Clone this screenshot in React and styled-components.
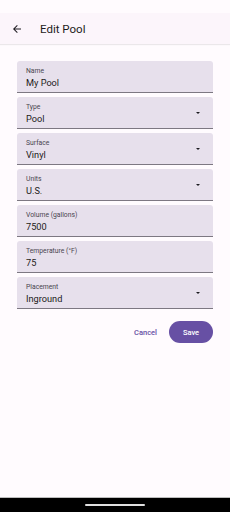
import React from 'react'
import styled, { createGlobalStyle } from 'styled-components'

const GlobalStyle = createGlobalStyle`
  html, body {
    margin: 0;
    padding: 0;
    background: #fffbfe;
    font-family: Roboto, "Noto Sans", sans-serif;
  }
`

const fields = [
  { label: 'Name', value: 'My Pool' },
  { label: 'Type', value: 'Pool', select: true },
  { label: 'Surface', value: 'Vinyl', select: true },
  { label: 'Units', value: 'U.S.', select: true },
  { label: 'Volume (gallons)', value: '7500' },
  { label: 'Temperature (°F)', value: '75' },
  { label: 'Placement', value: 'Inground', select: true }
]

const Screen = styled.div`
  width: 230px;
  height: 512px;
  display: flex;
  flex-direction: column;
  background: #fffbfe;
  overflow: hidden;
`

const StatusBar = styled.div`
  height: 13px;
  background: #fffbfe;
`

const AppBar = styled.header`
  height: 31px;
  display: flex;
  align-items: center;
  background: #fcf5fb;
  box-shadow: 0 1px 1px rgba(0, 0, 0, 0.08);
  padding-left: 10px;
`

const BackButton = styled.div`
  width: 14px;
  height: 14px;
  display: flex;
  align-items: center;
  justify-content: center;
  margin-right: 16px;
`

const Title = styled.h1`
  margin: 0;
  font-size: 11.5px;
  font-weight: 400;
  color: #1d1b20;
`

const Form = styled.main`
  flex: 1;
  display: flex;
  flex-direction: column;
  gap: 4px;
  padding: 17px 17px 0;
`

const Field = styled.div`
  height: 31px;
  background: #e7e0ec;
  border-radius: 3px 3px 0 0;
  border-bottom: 1px solid #7d7882;
  display: flex;
  align-items: center;
  padding: 0 9px;
`

const FieldText = styled.div`
  flex: 1;
  display: flex;
  flex-direction: column;
  padding-top: 2px;
`

const Label = styled.span`
  font-size: 6.8px;
  line-height: 9px;
  color: #49454f;
`

const Value = styled.span`
  font-size: 9.2px;
  line-height: 13px;
  color: #1d1b20;
`

const Caret = styled.span`
  width: 0;
  height: 0;
  border-left: 2.5px solid transparent;
  border-right: 2.5px solid transparent;
  border-top: 2.5px solid #1d1b20;
  margin-right: 4px;
`

const Actions = styled.div`
  display: flex;
  justify-content: flex-end;
  align-items: center;
  gap: 12px;
  margin-top: 8px;
`

const TextButton = styled.button`
  border: none;
  background: none;
  font-family: inherit;
  font-size: 7.5px;
  font-weight: 500;
  color: #6750a4;
  padding: 0;
`

const FilledButton = styled.button`
  border: none;
  width: 44px;
  height: 22px;
  border-radius: 11px;
  background: #6750a4;
  color: #ffffff;
  font-family: inherit;
  font-size: 7.5px;
  font-weight: 500;
  padding: 0;
`

const NavBar = styled.div`
  height: 14px;
  background: #000;
  border-top: 1px solid #bdbdbd;
  display: flex;
  align-items: center;
  justify-content: center;
`

const Handle = styled.div`
  width: 60px;
  height: 2px;
  border-radius: 1px;
  background: #e0e0e0;
`

export default function App () {
  return (
    <>
      <GlobalStyle />
      <Screen>
        <StatusBar />
        <AppBar>
          <BackButton>
            <svg width='12' height='12' viewBox='0 0 24 24'>
              <path d='M20 11H7.83l5.59-5.59L12 4l-8 8 8 8 1.41-1.41L7.83 13H20v-2z' fill='#1d1b20' />
            </svg>
          </BackButton>
          <Title>Edit Pool</Title>
        </AppBar>
        <Form>
          {fields.map(f => (
            <Field key={f.label}>
              <FieldText>
                <Label>{f.label}</Label>
                <Value>{f.value}</Value>
              </FieldText>
              {f.select && <Caret />}
            </Field>
          ))}
          <Actions>
            <TextButton>Cancel</TextButton>
            <FilledButton>Save</FilledButton>
          </Actions>
        </Form>
        <NavBar>
          <Handle />
        </NavBar>
      </Screen>
    </>
  )
}
